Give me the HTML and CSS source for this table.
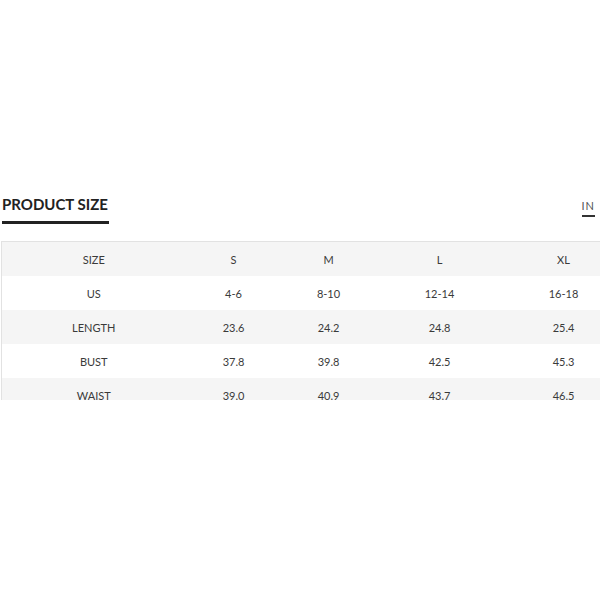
FILE: index.html
```html
<!DOCTYPE html>
<html>
<head>
<meta charset="utf-8">
<link rel="stylesheet" href="styles.css">
</head>
<body>
<div class="page">
  <div class="header">
    <div class="title">PRODUCT SIZE</div>
    <div class="unit">IN</div>
  </div>
  <div class="table-wrap">
    <table class="size-table">
      <colgroup>
        <col class="c1"><col class="c2"><col class="c3"><col class="c4"><col class="c5">
      </colgroup>
      <tr class="alt"><td>SIZE</td><td>S</td><td>M</td><td>L</td><td>XL</td></tr>
      <tr><td>US</td><td>4-6</td><td>8-10</td><td>12-14</td><td>16-18</td></tr>
      <tr class="alt"><td>LENGTH</td><td>23.6</td><td>24.2</td><td>24.8</td><td>25.4</td></tr>
      <tr><td>BUST</td><td>37.8</td><td>39.8</td><td>42.5</td><td>45.3</td></tr>
      <tr class="alt"><td>WAIST</td><td>39.0</td><td>40.9</td><td>43.7</td><td>46.5</td></tr>
    </table>
  </div>
</div>
</body>
</html>
```
FILE: styles.css
```css
html, body {
  margin: 0;
  padding: 0;
  background: #fff;
}
body {
  font-family: Lato, "Open Sans", sans-serif;
  overflow: hidden;
}
.page {
  width: 600px;
  height: 600px;
  padding-top: 195px;
  box-sizing: border-box;
  overflow: hidden;
}
.header {
  display: flex;
  justify-content: space-between;
  align-items: flex-start;
  padding: 0 5px 0 2px;
}
.title {
  font-size: 15px;
  font-weight: 700;
  line-height: 18px;
  color: #222;
  letter-spacing: 0;
  padding-bottom: 8px;
  border-bottom: 3px solid #222;
  padding-right: 1px;
}
.unit {
  margin-top: 4px;
  font-size: 11px;
  line-height: 13px;
  color: #555;
  letter-spacing: 1px;
  padding-bottom: 3px;
  border-bottom: 2px solid #333;
}
.table-wrap {
  margin-top: 17px;
  margin-left: 1px;
  height: 159px;
  overflow: hidden;
}
.size-table {
  border-collapse: collapse;
  table-layout: fixed;
  width: 622px;
  border-top: 1px solid #e2e2e2;
  border-left: 1px solid #e2e2e2;
}
.c1 { width: 184px; }
.c2 { width: 96px; }
.c3 { width: 94px; }
.c4 { width: 128px; }
.c5 { width: 120px; }
.size-table td {
  height: 34px;
  padding: 1px 0 0;
  box-sizing: border-box;
  text-align: center;
  vertical-align: middle;
  font-size: 11px;
  color: #3a3a3a;
}
.size-table tr.alt td {
  background: #f5f5f5;
}
```
